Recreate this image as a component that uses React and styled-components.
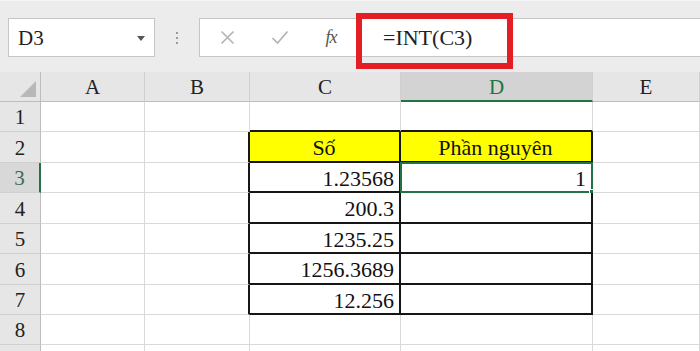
import React from "react";
import styled, { createGlobalStyle } from "styled-components";

const SERIF = `"Liberation Serif", "Times New Roman", serif`;

const Global = createGlobalStyle`
  html, body { margin: 0; padding: 0; background: #ffffff; }
  body { width: 700px; height: 351px; overflow: hidden; font-family: ${SERIF}; }
  * { box-sizing: border-box; }
`;

const GREEN = "#217346";

const Page = styled.div`
  width: 700px;
  height: 351px;
  overflow: hidden;
  display: flex;
  flex-direction: column;
  font-family: ${SERIF};
`;

const Toolbar = styled.div`
  position: relative;
  height: 72px;
  flex: none;
  background: #ececec;
  border-top: 1px solid #f6f6f6;
  padding-top: 17px;
  display: flex;
  align-items: flex-start;
`;

const NameBox = styled.div`
  margin-left: 8px;
  width: 147px;
  height: 39px;
  background: #ffffff;
  border: 1px solid #c6c6c6;
  display: flex;
  align-items: center;
  justify-content: space-between;
  padding: 1px 9px 0 9px;
  font-size: 21px;
  color: #1e1e1e;
`;

const Arrow = styled.span`
  width: 0;
  height: 0;
  border-left: 4px solid transparent;
  border-right: 4px solid transparent;
  border-top: 5px solid #555;
  margin-top: 1px;
`;

const Dots = styled.div`
  width: 44px;
  height: 39px;
  display: flex;
  flex-direction: column;
  align-items: center;
  justify-content: center;
  gap: 3px;
`;

const Dot = styled.span`
  width: 2px;
  height: 2px;
  background: #9a9a9a;
`;

const FormulaBox = styled.div`
  flex: 1;
  height: 39px;
  background: #ffffff;
  border: 1px solid #c6c6c6;
  border-right: none;
  display: flex;
  align-items: center;
`;

const IconSlot = styled.div`
  width: ${(p) => p.$w}px;
  display: flex;
  justify-content: center;
  align-items: center;
  color: ${(p) => p.$color};
`;

const Fx = styled.span`
  font-style: italic;
  font-size: 18px;
  color: #555;
  letter-spacing: -1px;
`;

const FormulaText = styled.div`
  margin-left: 27px;
  padding-top: 1px;
  font-size: 22px;
  color: #222;
`;

const Highlight = styled.div`
  position: absolute;
  left: 356px;
  top: 12px;
  width: 157px;
  height: 56px;
  border: 6px solid #e31e25;
  pointer-events: none;
`;

const Sheet = styled.div`
  flex: 1;
  display: grid;
  grid-template-columns: 41px 104px 105px 151px 192px 107px;
  grid-template-rows: 30px 30px 31px 30px 31px 30px 31px 30px 30px 30px;
  background: #ffffff;
`;

const ColHead = styled.div`
  background: ${(p) => (p.$sel ? "#d3d3d3" : "#e6e6e6")};
  border-right: 1px solid #d0d0d0;
  border-bottom: ${(p) => (p.$sel ? `2px solid ${GREEN}` : "1px solid #bdbdbd")};
  color: ${(p) => (p.$sel ? GREEN : "#222")};
  font-size: 21px;
  display: flex;
  align-items: center;
  justify-content: center;
  padding-top: 2px;
`;

const Corner = styled.div`
  background: #e6e6e6;
  border-right: 1px solid #bdbdbd;
  border-bottom: 1px solid #bdbdbd;
  display: flex;
  align-items: flex-end;
  justify-content: flex-end;
  padding: 0 4px 4px 0;
`;

const RowHead = styled.div`
  background: ${(p) => (p.$sel ? "#d8d8d8" : "#e6e6e6")};
  border-right: ${(p) => (p.$sel ? `2px solid ${GREEN}` : "1px solid #bdbdbd")};
  border-bottom: 1px solid #d0d0d0;
  color: ${(p) => (p.$sel ? "#3d6b50" : "#222")};
  font-size: 21px;
  display: flex;
  align-items: center;
  justify-content: center;
  padding-top: 2px;
`;

const Cell = styled.div`
  position: relative;
  background: ${(p) => (p.$fill ? "#ffff00" : "#ffffff")};
  border-right: ${(p) => (p.$darkRight ? "2px solid #161616" : "1px solid #d9d9d9")};
  border-bottom: ${(p) => (p.$darkBottom ? "2px solid #161616" : "1px solid #d9d9d9")};
  font-size: 22px;
  line-height: 28px;
  color: #111;
  padding: 2px 5px 0 4px;
  text-align: ${(p) => p.$align};
  white-space: nowrap;
`;

const Selection = styled.div`
  position: absolute;
  left: -1px;
  top: -1px;
  right: -2px;
  bottom: -2px;
  border: 2px solid ${GREEN};
  pointer-events: none;
`;

const Handle = styled.span`
  position: absolute;
  right: -5px;
  bottom: -5px;
  width: 7px;
  height: 7px;
  background: ${GREEN};
  border: 1px solid #ffffff;
`;

const COLS = ["A", "B", "C", "D", "E"];

const DATA = {
  2: { C: "Số", D: "Phần nguyên" },
  3: { C: "1.23568", D: "1" },
  4: { C: "200.3" },
  5: { C: "1235.25" },
  6: { C: "1256.3689" },
  7: { C: "12.256" },
};

function cellProps(r, c) {
  const inRows = r >= 2 && r <= 7;
  const inTableCol = c === "C" || c === "D";
  return {
    $darkRight: inRows && (c === "B" || c === "C" || c === "D"),
    $darkBottom: inTableCol && r >= 1 && r <= 7,
    $fill: r === 2 && inTableCol,
    $align: r === 2 ? "center" : "right",
  };
}

export default function App() {
  const rows = [1, 2, 3, 4, 5, 6, 7, 8, 9];
  return (
    <Page>
      <Global />
      <Toolbar>
        <NameBox>
          <span>D3</span>
          <Arrow />
        </NameBox>
        <Dots>
          <Dot />
          <Dot />
          <Dot />
        </Dots>
        <FormulaBox>
          <IconSlot $w={54} $color="#b3b3b3">
            <svg width="15" height="15" viewBox="0 0 15 15">
              <path d="M1.5 1.5 L13.5 13.5 M13.5 1.5 L1.5 13.5" stroke="currentColor" strokeWidth="1.6" fill="none" />
            </svg>
          </IconSlot>
          <IconSlot $w={52} $color="#b3b3b3">
            <svg width="18" height="15" viewBox="0 0 18 15">
              <path d="M1.5 8 L6.5 13 L16.5 1.5" stroke="currentColor" strokeWidth="1.7" fill="none" />
            </svg>
          </IconSlot>
          <IconSlot $w={50} $color="#555">
            <Fx>fx</Fx>
          </IconSlot>
          <FormulaText>=INT(C3)</FormulaText>
        </FormulaBox>
        <Highlight />
      </Toolbar>
      <Sheet>
        <Corner>
          <svg width="16" height="16" viewBox="0 0 16 16">
            <path d="M16 0 L16 16 L0 16 Z" fill="#b8b8b8" />
          </svg>
        </Corner>
        {COLS.map((c) => (
          <ColHead key={c} $sel={c === "D"}>
            {c}
          </ColHead>
        ))}
        {rows.map((r) => (
          <React.Fragment key={r}>
            <RowHead $sel={r === 3}>{r < 9 ? r : ""}</RowHead>
            {COLS.map((c) => {
              const val = (DATA[r] && DATA[r][c]) || "";
              const sel = r === 3 && c === "D";
              return (
                <Cell key={c} {...cellProps(r, c)}>
                  {val}
                  {sel && (
                    <Selection>
                      <Handle />
                    </Selection>
                  )}
                </Cell>
              );
            })}
          </React.Fragment>
        ))}
      </Sheet>
    </Page>
  );
}
